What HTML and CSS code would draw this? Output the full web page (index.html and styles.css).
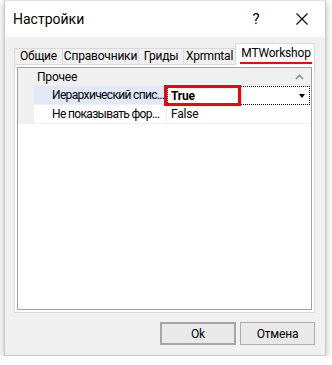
FILE: index.html
```html
<!DOCTYPE html>
<html>
<head>
<meta charset="utf-8">
<link rel="stylesheet" href="styles.css">
</head>
<body>
<div class="window">
  <div class="titlebar">
    <span class="title">Настройки</span>
    <span class="tb-btn help">?</span>
    <span class="tb-btn close">
      <svg width="12" height="12" viewBox="0 0 12 12"><path d="M0.5 0.5 L11.5 11.5 M11.5 0.5 L0.5 11.5" stroke="#000" stroke-width="1.1"/></svg>
    </span>
  </div>
  <div class="client">
    <div class="tabs">
      <div class="tab">Общие</div>
      <div class="tab">Справочники</div>
      <div class="tab">Гриды</div>
      <div class="tab">Xprmntal</div>
      <div class="tab active"><span class="tab-label">MTWorkshop</span></div>
    </div>
    <div class="panel">
      <div class="grid">
        <div class="gutter"></div>
        <div class="cat-name">Прочее</div>
        <div class="cat-end"><svg width="9" height="6" viewBox="0 0 9 6"><path d="M1 5 L4.5 1.5 L8 5" stroke="#909090" stroke-width="1.6" fill="none"/></svg></div>

        <div class="gutter"></div>
        <div class="name sel"><span class="txt">Иерархический спис...</span></div>
        <div class="value focus"><b>True</b><span class="dd"></span><div class="hl"></div></div>

        <div class="gutter"></div>
        <div class="name"><span class="txt">Не показывать фор...</span></div>
        <div class="value">False</div>

        <div class="gutter fill"></div>
        <div class="fill"></div>
        <div class="fill"></div>
      </div>
    </div>
    <div class="buttons">
      <div class="btn default">Ok</div>
      <div class="btn">Отмена</div>
    </div>
  </div>
</div>
</body>
</html>
```
FILE: styles.css
```css
* { box-sizing: border-box; }
html, body { margin: 0; padding: 0; background: #ffffff; }
body {
  font-family: Roboto, "Liberation Sans", sans-serif;
  font-size: 12px;
  letter-spacing: -0.2px;
  color: #000;
}
.window {
  margin-left: 4px;
  width: 322px;
  height: 356px;
  background: #f0f0f0;
  border: 1px solid #c8c8c8;
  border-top-color: #e0e0e0;
  box-shadow: 0 2px 8px rgba(0,0,0,0.28);
  display: flex;
  flex-direction: column;
}
.titlebar {
  height: 36px;
  background: #ffffff;
  display: flex;
  align-items: center;
}
.title {
  font-size: 14px;
  letter-spacing: 0;
  margin-left: 8px;
  margin-top: -1px;
  flex: 1;
}
.tb-btn {
  width: 46px;
  height: 36px;
  display: flex;
  align-items: center;
  justify-content: center;
}
.help { font-size: 15px; }
.client {
  flex: 1;
  display: flex;
  flex-direction: column;
  padding: 6px 10px 10px 9px;
}
.tabs {
  display: flex;
  align-items: flex-end;
  height: 21px;
  position: relative;
  z-index: 1;
}
.tab {
  height: 16px;
  line-height: 15px;
  padding: 0;
  text-align: center;
  border: 1px solid #d9d9d9;
  border-bottom: none;
  border-right: none;
  background: #f0f0f0;
  white-space: nowrap;
}
.tab:nth-child(1) { width: 48px; }
.tab:nth-child(2) { width: 76px; }
.tab:nth-child(3) { width: 45px; }
.tab:nth-child(4) { width: 52px; }
.tab.active {
  width: 80px;
  height: 22px;
  line-height: 18px;
  background: #ffffff;
  border-right: 1px solid #d9d9d9;
  margin-bottom: -1px;
  padding: 0 0 0 4px;
  text-align: left;
}
.tab-label {
  display: inline-block;
  border-bottom: 2px solid #ff0000;
  line-height: 17px;
  width: 72px;
  text-align: center;
}
.panel {
  height: 249px;
  background: #ffffff;
  border: 1px solid #d9d9d9;
  padding: 2px;
}
.grid {
  height: 100%;
  border: 1px solid #a0a0a0;
  background: #ffffff;
  display: grid;
  grid-template-columns: 16px 133px 1fr;
  grid-template-rows: 18px 19px 19px 1fr;
}
.gutter { background: #f0f0f0; }
.gutter.fill { background: #ffffff; }
.cat-name {
  background: #f0f0f0;
  padding-left: 3px;
  line-height: 18px;
}
.cat-end {
  background: #f0f0f0;
  display: flex;
  align-items: center;
  justify-content: flex-end;
  padding-right: 7px;
}
.name {
  line-height: 18px;
  letter-spacing: -0.65px;
  border-bottom: 1px solid #f0f0f0;
  border-right: 1px solid #f0f0f0;
  white-space: nowrap;
  overflow: hidden;
}
.name .txt { margin-left: 18px; }
.name.sel { background: #e1e8f8; }
.value {
  position: relative;
  padding-left: 4px;
  line-height: 18px;
  border-bottom: 1px solid #f0f0f0;
  white-space: nowrap;
  display: flex;
  align-items: center;
}
.value.focus {
  border: 1px dotted #000;
  margin-right: 1px;
  padding-left: 3px;
}
.dd {
  margin-left: auto;
  margin-right: 4px;
  width: 0; height: 0;
  border-left: 3.5px solid transparent;
  border-right: 3.5px solid transparent;
  border-top: 4px solid #000;
}
.hl {
  position: absolute;
  left: -4px;
  top: -2px;
  width: 77px;
  height: 21px;
  border: 3px solid #ff0000;
}
.buttons {
  display: flex;
  justify-content: flex-end;
  gap: 4px;
  margin-top: 9px;
}
.btn {
  width: 76px;
  height: 23px;
  border: 1px solid #adadad;
  background: #e9e9e9;
  display: flex;
  align-items: center;
  justify-content: center;
}
.btn.default { border: 2px solid #a6a6a6; }
.btn:last-child { width: 75px; }
```
